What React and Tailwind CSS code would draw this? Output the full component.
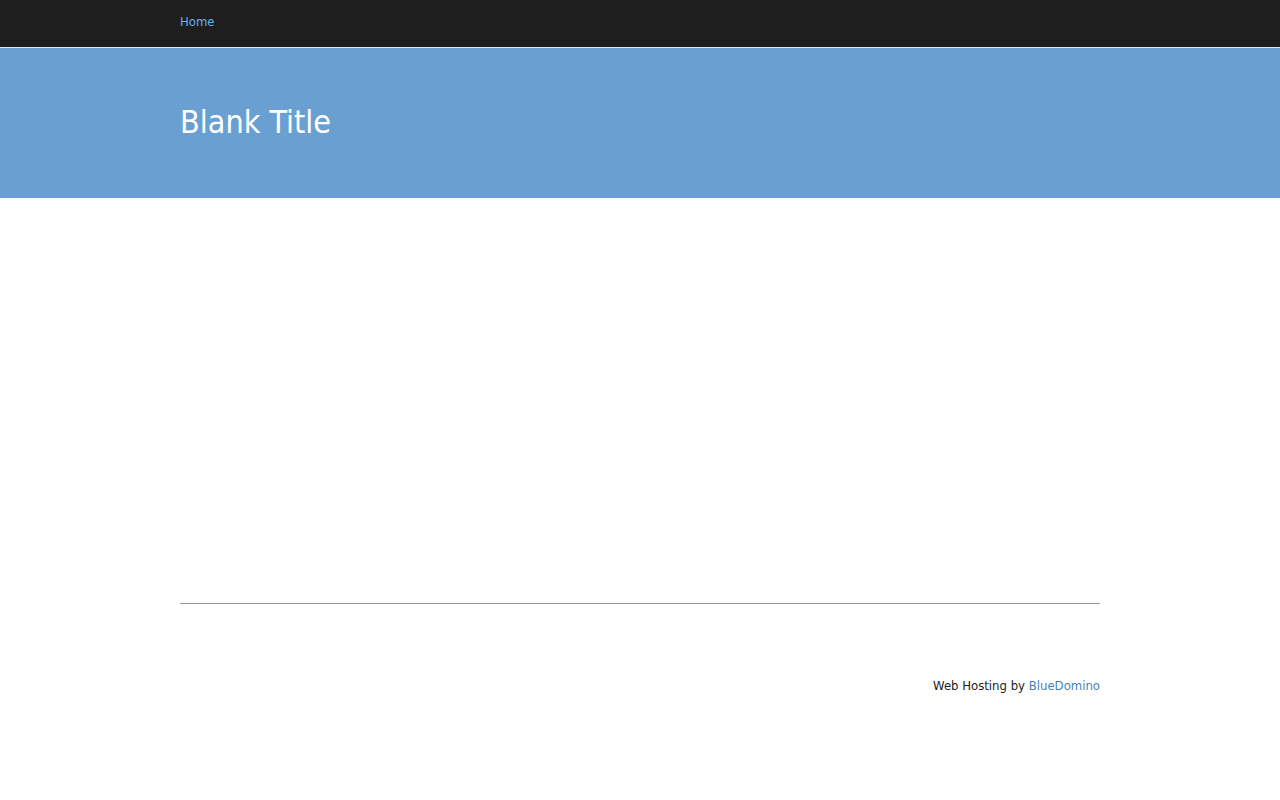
import React from 'react';

const font = { fontFamily: '"DejaVu Sans Condensed", "DejaVu Sans", sans-serif' };

const App = () => {
  return (
    <div className="min-h-[800px] bg-white" style={font}>
      <nav className="h-[47px] bg-[#1e1e1e] border-b border-[#e6e6e6] box-content">
        <div className="w-[920px] mx-auto pt-[9px]">
          <a href="#" className="text-[13px] leading-[18px] text-[#62b2ea]">Home</a>
        </div>
      </nav>
      <header className="h-[150px] bg-[#6a9fd2]">
        <div className="w-[920px] mx-auto pt-[54px]">
          <h1 className="text-[32px] leading-[40px] text-white">Blank Title</h1>
        </div>
      </header>
      <main className="w-[920px] mx-auto h-[405px]" />
      <footer className="w-[920px] mx-auto border-t border-[#999999]">
        <p className="pt-[73px] text-right text-[13px] leading-[18px] text-[#222222]">
          Web Hosting by <a href="#" className="text-[#4a7fb8]">BlueDomino</a>
        </p>
      </footer>
    </div>
  );
};

export default App;
